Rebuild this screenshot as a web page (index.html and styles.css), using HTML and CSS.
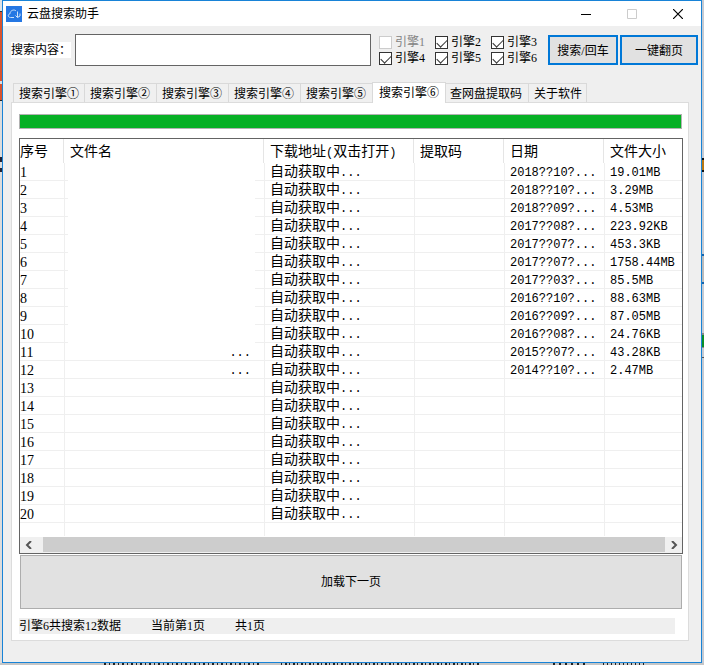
FILE: index.html
```html
<!DOCTYPE html>
<html lang="zh-CN">

<head>
  <meta charset="UTF-8">
  <meta name="viewport" content="width=device-width, initial-scale=1.0">
  <title>云盘搜索助手</title>
  <link rel="stylesheet" href="styles.css">
</head>

<body>
  <div class="edge left"></div>
  <div class="window">
    <header class="titlebar">
      <svg class="logo" width="16" height="16" viewBox="0 0 16 16">
        <rect width="16" height="16" fill="#2577e3"/>
        <path d="M8 11.5H4.5C1.8 11.5 1.5 8.2 4 7.8C4 4.2 8.5 3 10 5M11.5 5.5v6M9.5 9.5l2 2l2.5-1.5V7.5" fill="none" stroke="#cfe2fa"/>
      </svg>
      <h1>云盘搜索助手</h1>
      <button class="win-btn min" aria-label="最小化">
        <svg width="10" height="10"><path d="M0 5.5h10" stroke="#000"/></svg>
      </button>
      <button class="win-btn max" aria-label="最大化" disabled>
        <svg width="10" height="10"><path d="M.5.5h9v9h-9z" fill="none" stroke="#ccc"/></svg>
      </button>
      <button class="win-btn exit" aria-label="关闭">
        <svg width="10" height="10"><path d="M0 0l10 10M10 0L0 10" stroke="#000" stroke-width="1.2"/></svg>
      </button>
    </header>

    <form class="search">
      <label class="search-label" for="keyword">搜索内容：</label>
      <input class="keyword" id="keyword" type="text">
      <div class="engines">
        <label class="disabled"><input type="checkbox" disabled>引擎1</label>
        <label><input type="checkbox" checked>引擎2</label>
        <label><input type="checkbox" checked>引擎3</label>
        <label><input type="checkbox" checked>引擎4</label>
        <label><input type="checkbox" checked>引擎5</label>
        <label><input type="checkbox" checked>引擎6</label>
      </div>
      <div class="actions">
        <button type="button" class="btn-search">搜索/回车</button>
        <button type="button" class="btn-page">一键翻页</button>
      </div>
    </form>

    <nav class="tabs">
      <button>搜索引擎①</button>
      <button>搜索引擎②</button>
      <button>搜索引擎③</button>
      <button>搜索引擎④</button>
      <button>搜索引擎⑤</button>
      <button class="active">搜索引擎⑥</button>
      <button>查网盘提取码</button>
      <button>关于软件</button>
    </nav>

    <main class="panel">
      <div class="progress" role="progressbar" aria-label="搜索进度" aria-valuenow="100"></div>
      <div class="list">
        <table>
          <colgroup>
            <col class="c-no"><col class="c-name"><col class="c-url"><col class="c-code"><col class="c-date"><col>
          </colgroup>
          <thead>
            <tr><th>序号</th><th>文件名</th><th>下载地址<span>(</span>双击打开<span>)</span></th><th>提取码</th><th>日期</th><th>文件大小</th></tr>
          </thead>
          <tbody>
            <tr><td>1</td><td class="blank"></td><td>自动获取中<span>...</span></td><td></td><td><span>2018??10?...</span></td><td><span>19.01MB</span></td></tr>
            <tr><td>2</td><td class="blank"></td><td>自动获取中<span>...</span></td><td></td><td><span>2018??10?...</span></td><td><span>3.29MB</span></td></tr>
            <tr><td>3</td><td class="blank"></td><td>自动获取中<span>...</span></td><td></td><td><span>2018??09?...</span></td><td><span>4.53MB</span></td></tr>
            <tr><td>4</td><td class="blank"></td><td>自动获取中<span>...</span></td><td></td><td><span>2017??08?...</span></td><td><span>223.92KB</span></td></tr>
            <tr><td>5</td><td class="blank"></td><td>自动获取中<span>...</span></td><td></td><td><span>2017??07?...</span></td><td><span>453.3KB</span></td></tr>
            <tr><td>6</td><td class="blank"></td><td>自动获取中<span>...</span></td><td></td><td><span>2017??07?...</span></td><td><span>1758.44MB</span></td></tr>
            <tr><td>7</td><td class="blank"></td><td>自动获取中<span>...</span></td><td></td><td><span>2017??03?...</span></td><td><span>85.5MB</span></td></tr>
            <tr><td>8</td><td class="blank"></td><td>自动获取中<span>...</span></td><td></td><td><span>2016??10?...</span></td><td><span>88.63MB</span></td></tr>
            <tr><td>9</td><td class="blank"></td><td>自动获取中<span>...</span></td><td></td><td><span>2016??09?...</span></td><td><span>87.05MB</span></td></tr>
            <tr><td>10</td><td class="blank"></td><td>自动获取中<span>...</span></td><td></td><td><span>2016??08?...</span></td><td><span>24.76KB</span></td></tr>
            <tr><td>11</td><td class="more"><span>...</span></td><td>自动获取中<span>...</span></td><td></td><td><span>2015??07?...</span></td><td><span>43.28KB</span></td></tr>
            <tr><td>12</td><td class="more"><span>...</span></td><td>自动获取中<span>...</span></td><td></td><td><span>2014??10?...</span></td><td><span>2.47MB</span></td></tr>
            <tr><td>13</td><td></td><td>自动获取中<span>...</span></td><td></td><td></td><td></td></tr>
            <tr><td>14</td><td></td><td>自动获取中<span>...</span></td><td></td><td></td><td></td></tr>
            <tr><td>15</td><td></td><td>自动获取中<span>...</span></td><td></td><td></td><td></td></tr>
            <tr><td>16</td><td></td><td>自动获取中<span>...</span></td><td></td><td></td><td></td></tr>
            <tr><td>17</td><td></td><td>自动获取中<span>...</span></td><td></td><td></td><td></td></tr>
            <tr><td>18</td><td></td><td>自动获取中<span>...</span></td><td></td><td></td><td></td></tr>
            <tr><td>19</td><td></td><td>自动获取中<span>...</span></td><td></td><td></td><td></td></tr>
            <tr><td>20</td><td></td><td>自动获取中<span>...</span></td><td></td><td></td><td></td></tr>
            <tr class="rest"><td></td><td></td><td></td><td></td><td></td><td></td></tr>
          </tbody>
        </table>
        <div class="scrollbar">
          <button aria-label="向左滚动"><svg width="8" height="8"><path d="M6 0L2 4l4 4" fill="none" stroke="#555" stroke-width="2"/></svg></button>
          <div class="thumb"></div>
          <button aria-label="向右滚动"><svg width="8" height="8"><path d="M2 0l4 4l-4 4" fill="none" stroke="#555" stroke-width="2"/></svg></button>
        </div>
      </div>
      <button class="load">加载下一页</button>
      <footer class="status">
        <span>引擎6共搜索12数据</span>
        <span>当前第1页</span>
        <span>共1页</span>
      </footer>
    </main>
  </div>
  <div class="edge right"></div>
  <div class="edge bottom"></div>
</body>

</html>
```
FILE: styles.css
```css
* {
  box-sizing: border-box;
}

body {
  margin: 0;
  min-height: 100vh;
  display: grid;
  grid-template-columns: 2px 1fr 2px;
  grid-template-rows: 1fr 2px;
  background-color: #c8cbd0;
  color: #000;
  font: 12px/16px "Liberation Serif", "Noto Sans CJK SC", sans-serif;
}

button,
input {
  font: inherit;
  color: inherit;
  margin: 0;
  padding: 0;
}

/* slivers of the windows behind this one */
.edge.left {
  background: linear-gradient(#dde1e6 11px, #333 11px, #333 12px, #d8542f 12px, #d8542f 81px, #ddd 81px, #ddd 84px, #d8542f 84px, #d8542f 100px, #222 100px, #222 101px, #dcdcdc 101px, #dcdcdc 157px, #223 157px, #223 162px, #dcdcdc 162px, #dcdcdc 168px, #223 168px, #223 172px, #dcdcdc 172px);
}

.edge.right {
  background: linear-gradient(#c5cad2 158px, #111 158px, #111 160px, #b97712 160px, #b97712 170px, #111 170px, #111 172px, #c5cad2 172px, #c5cad2 254px, #1565ad 254px, #1565ad 256px, #bbb 256px, #bbb 282px, #1565ad 282px, #1565ad 284px, #c5cad2 284px, #c5cad2 333px, #888 333px, #888 335px, #0b8f28 335px, #0b8f28 347px, #888 347px, #888 348px, #c5cad2 348px, #c5cad2 357px, #555 357px, #555 358px, #c5cad2 358px);
}

.edge.bottom {
  grid-column: 1 / -1;
  background:
    repeating-linear-gradient(90deg, #222 0 2px, transparent 2px 5px, #222 5px 6px, transparent 6px 9px) 104px 0 / 156px 2px no-repeat,
    repeating-linear-gradient(90deg, #222 0 1px, transparent 1px 4px, #222 4px 6px, transparent 6px 8px) 281px 0 / 200px 2px no-repeat,
    repeating-linear-gradient(90deg, #222 0 2px, transparent 2px 6px) 553px 0 / 32px 2px no-repeat,
    repeating-linear-gradient(90deg, #222 0 1px, transparent 1px 4px) 603px 0 / 41px 2px no-repeat,
    #c6c6c6;
}

.window {
  min-width: 0;
  display: flex;
  flex-direction: column;
  border: 1px solid #1883d7;
  background-color: #efefef;
}

.titlebar {
  height: 25px;
  display: flex;
  align-items: center;
  padding-left: 3px;
  background-color: #fff;
}

.titlebar h1 {
  flex: 1;
  margin: 0 0 0 5px;
  font-size: 12px;
  font-weight: normal;
}

.win-btn {
  width: 46px;
  height: 25px;
  display: flex;
  align-items: center;
  justify-content: center;
  border: none;
  background-color: transparent;
}

.search {
  display: flex;
  align-items: flex-start;
  padding: 8px 3px 0 8px;
}

.search-label {
  width: 60px;
  margin: 8px 4px 0 0;
  white-space: nowrap;
  background-color: #fff;
}

.keyword {
  flex: 1;
  min-width: 0;
  height: 32px;
  border: 1px solid #646464;
  padding: 0 4px;
  background-color: #fff;
}

.engines {
  display: grid;
  grid-template-columns: repeat(3, 56px);
  margin-left: 8px;
}

.engines label {
  height: 16px;
  display: flex;
  align-items: center;
  gap: 3px;
  white-space: nowrap;
}

.engines .disabled {
  color: #838383;
}

.engines input {
  appearance: none;
  width: 13px;
  height: 13px;
  border: 1px solid #333;
  background-color: #fff;
}

.engines input:checked::before {
  content: '';
  display: block;
  width: 9px;
  height: 5px;
  margin: 2px 0 0 1px;
  border-left: 1px solid #333;
  border-bottom: 1px solid #333;
  transform: rotate(-45deg);
}

.engines input:disabled {
  border-color: #ccc;
}

.actions {
  display: flex;
  gap: 2px;
  margin: 1px 0 0 1px;
}

.actions button {
  height: 30px;
  border: 2px solid #0078d7;
  padding-top: 2px;
  background-color: #e1e1e1;
}

.btn-search {
  width: 70px;
}

.btn-page {
  width: 78px;
}

.tabs {
  height: 20px;
  display: flex;
  align-items: flex-end;
  margin: 16px 0 0 10px;
}

.tabs button {
  height: 19px;
  border: 1px solid #d9d9d9;
  border-bottom: none;
  border-right: none;
  padding: 2px 6px 0 5px;
  white-space: nowrap;
  line-height: 16px;
  background-color: #f0f0f0;
}

.tabs button:first-child {
  padding-right: 5px;
}

.tabs button:last-child {
  border-right: 1px solid #d9d9d9;
  padding-right: 4px;
}

.tabs .active {
  height: 21px;
  margin-bottom: -1px;
  padding: 0 6px;
  border-right: 1px solid #d9d9d9;
  background-color: #fff;
  z-index: 1;
}

.tabs .active + button {
  border-left: none;
  padding: 2px 6px 0 4px;
}

.panel {
  flex: 1;
  display: flex;
  flex-direction: column;
  margin: 0 12px 21px 8px;
  border: 1px solid #dcdcdc;
  padding: 11px 5px 5px 7px;
  background-color: #fff;
}

.progress {
  height: 15px;
  margin-right: 1px;
  border: 1px solid #b2b2b2;
  background-color: #06b025;
}

.list {
  margin-top: 9px;
  border: 1px solid #646464;
}

table {
  width: 100%;
  table-layout: fixed;
  border-collapse: separate;
  border-spacing: 0;
  font-size: 14px;
  line-height: 14px;
}

.c-no {
  width: 45px;
}

.c-name {
  width: 200px;
}

.c-url {
  width: 150px;
}

.c-code {
  width: 90px;
}

.c-date {
  width: 100px;
}

th {
  height: 24px;
  padding: 2px 0 0 5px;
  text-align: left;
  font-weight: normal;
  white-space: nowrap;
  background: linear-gradient(#e5e5e5, #e5e5e5) right 1px top 0 / 1px 100% no-repeat;
}

th:last-child {
  background: none;
}

td {
  height: 18px;
  padding: 2px 0 0 5px;
  white-space: nowrap;
  border-right: 1px solid #efefef;
  border-bottom: 1px solid #efefef;
}

th:first-child,
td:first-child {
  padding-left: 0;
}

td:last-child {
  border-right: none;
}

th span,
td span {
  font-family: "Liberation Mono", monospace;
  font-size: 12px;
}

td.blank {
  border-bottom: none;
  background: linear-gradient(90deg, #efefef 3px, transparent 3px, transparent calc(100% - 9px), #efefef calc(100% - 9px)) left bottom / 100% 1px no-repeat;
}

td.more {
  padding-right: 13px;
  text-align: right;
}

.rest td {
  height: 13px;
  border-bottom: none;
}

.scrollbar {
  height: 16px;
  display: flex;
  margin-top: 1px;
  padding-bottom: 1px;
  background-color: #f0f0f0;
}

.scrollbar button {
  width: 17px;
  display: flex;
  align-items: center;
  justify-content: center;
  border: none;
  background-color: transparent;
}

.thumb {
  flex: 1;
  margin-left: 6px;
  background-color: #cdcdcd;
}

.load {
  height: 54px;
  margin: 1px 1px 0;
  border: 1px solid #adadad;
  background-color: #e1e1e1;
}

.status {
  height: 16px;
  display: flex;
  gap: 30px;
  margin: 9px 8px 0 0;
  background-color: #efefef;
}
```
